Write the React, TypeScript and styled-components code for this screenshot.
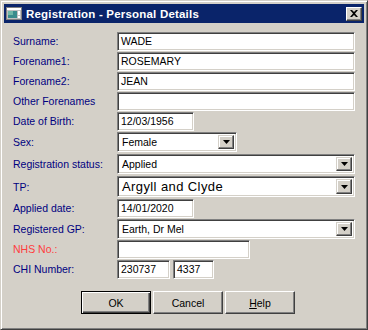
import React from 'react';
import styled, { createGlobalStyle, css } from 'styled-components';

const GlobalStyle = createGlobalStyle`
  html, body {
    margin: 0;
    padding: 0;
    background: #d4d0c8;
  }
  body {
    font-family: "Liberation Sans", Arial, sans-serif;
    font-size: 10.5px;
  }
`;

type RowDef = {
  label: string;
  h: number;
  red?: boolean;
  kind: 'text' | 'select' | 'chi';
  value?: string;
  w?: number;
  big?: boolean;
};

const rows: RowDef[] = [
  { label: 'Surname:', h: 20, kind: 'text', value: 'WADE' },
  { label: 'Forename1:', h: 20, kind: 'text', value: 'ROSEMARY' },
  { label: 'Forename2:', h: 20, kind: 'text', value: 'JEAN' },
  { label: 'Other Forenames', h: 20, kind: 'text', value: '' },
  { label: 'Date of Birth:', h: 20, kind: 'text', value: '12/03/1956', w: 77 },
  { label: 'Sex:', h: 22, kind: 'select', value: 'Female', w: 120 },
  { label: 'Registration status:', h: 22, kind: 'select', value: 'Applied' },
  { label: 'TP:', h: 23, kind: 'select', value: 'Argyll and Clyde', big: true },
  { label: 'Applied date:', h: 20, kind: 'text', value: '14/01/2020', w: 77 },
  { label: 'Registered GP:', h: 21, kind: 'select', value: 'Earth, Dr Mel' },
  { label: 'NHS No.:', h: 20, kind: 'text', value: '', w: 133, red: true },
  { label: 'CHI Number:', h: 20, kind: 'chi' },
];

const AppIcon = () => (
  <svg width="16" height="13" viewBox="0 0 16 13">
    <rect x="0.5" y="0.5" width="15" height="12" fill="#c0c0c0" stroke="#808080" />
    <rect x="1" y="1" width="14" height="2" fill="#ffffff" />
    <rect x="2" y="4" width="9" height="7" fill="#3a8c8c" />
    <rect x="2" y="4" width="5" height="4" fill="#70b8a8" />
    <rect x="12" y="4" width="2" height="4" fill="#ffffff" />
    <rect x="12" y="9" width="2" height="2" fill="#ffffff" />
  </svg>
);

const CloseGlyph = () => (
  <svg width="8" height="7" viewBox="0 0 8 7">
    <path d="M0 0h2l2 2 2-2h2L5 3.5 8 7H6L4 5 2 7H0l3-3.5z" fill="#000" />
  </svg>
);

const Arrow = () => (
  <svg width="7" height="4" viewBox="0 0 7 4">
    <path d="M0 0h7L3.5 4z" fill="#000" />
  </svg>
);

const App: React.FC = () => {
  return (
    <>
      <GlobalStyle />
      <Window>
        <TitleBar>
          <AppIcon />
          <Title>Registration - Personal Details</Title>
          <CloseButton>
            <CloseGlyph />
          </CloseButton>
        </TitleBar>
        <Form>
          {rows.map((r) => (
            <Row key={r.label} $h={r.h}>
              <Label $red={r.red}>{r.label}</Label>
              {r.kind === 'text' && <TextBox $w={r.w}>{r.value}</TextBox>}
              {r.kind === 'select' && (
                <Select $w={r.w} $big={r.big}>
                  <SelectValue $big={r.big}>{r.value}</SelectValue>
                  <DropButton>
                    <Arrow />
                  </DropButton>
                </Select>
              )}
              {r.kind === 'chi' && (
                <ChiGroup>
                  <TextBox $w={53}>230737</TextBox>
                  <TextBox $w={41}>4337</TextBox>
                </ChiGroup>
              )}
            </Row>
          ))}
        </Form>
        <Buttons>
          <Button $default>OK</Button>
          <Button>Cancel</Button>
          <Button>
            <u>H</u>elp
          </Button>
        </Buttons>
      </Window>
    </>
  );
};

export default App;

const raised = css`
  border: 1px solid;
  border-color: #ffffff #404040 #404040 #ffffff;
  box-shadow: inset -1px -1px #808080, inset 1px 1px #d4d0c8;
  background: #d4d0c8;
`;

const sunken = css`
  border: 1px solid;
  border-color: #808080 #ffffff #ffffff #808080;
  box-shadow: inset 1px 1px #404040, inset -1px -1px #d4d0c8;
  background: #ffffff;
`;

const Window = styled.div`
  box-sizing: border-box;
  width: 368px;
  height: 330px;
  padding: 3px;
  border: 1px solid;
  border-color: #d4d0c8 #404040 #404040 #d4d0c8;
  box-shadow: inset 1px 1px #ffffff, inset -1px -1px #808080;
  background: #d4d0c8;
  display: flex;
  flex-direction: column;
`;

const TitleBar = styled.div`
  height: 19px;
  background: #0a246a;
  display: flex;
  align-items: center;
  padding: 0 2px 0 2px;
  gap: 4px;
`;

const Title = styled.div`
  flex: 1;
  color: #ffffff;
  font-weight: bold;
  font-size: 11.5px;
  letter-spacing: 0.2px;
`;

const CloseButton = styled.div`
  box-sizing: border-box;
  width: 16px;
  height: 14px;
  ${raised};
  display: flex;
  align-items: center;
  justify-content: center;
`;

const Form = styled.div`
  padding: 8px 9px 0 9px;
  display: flex;
  flex-direction: column;
`;

const Row = styled.div<{ $h: number }>`
  height: ${({ $h }) => $h}px;
  display: grid;
  grid-template-columns: 104px 1fr;
  align-items: center;
`;

const Label = styled.div<{ $red?: boolean }>`
  color: ${({ $red }) => ($red ? '#ff3c3c' : '#000080')};
  white-space: nowrap;
`;

const TextBox = styled.div<{ $w?: number }>`
  box-sizing: border-box;
  height: 19px;
  width: ${({ $w }) => ($w ? `${$w}px` : '100%')};
  ${sunken};
  padding: 0 3px;
  display: flex;
  align-items: center;
  color: #000;
  white-space: nowrap;
`;

const ChiGroup = styled.div`
  display: flex;
  gap: 3px;
`;

const Select = styled.div<{ $w?: number; $big?: boolean }>`
  box-sizing: border-box;
  height: ${({ $big }) => ($big ? 21 : 20)}px;
  width: ${({ $w }) => ($w ? `${$w}px` : '100%')};
  ${sunken};
  padding: 2px;
  display: flex;
  align-items: stretch;
`;

const SelectValue = styled.div<{ $big?: boolean }>`
  flex: 1;
  display: flex;
  align-items: center;
  padding-left: 2px;
  color: #000;
  white-space: nowrap;
  ${({ $big }) =>
    $big &&
    css`
      font-size: 13px;
      letter-spacing: 0.4px;
    `}
`;

const DropButton = styled.div`
  box-sizing: border-box;
  width: 16px;
  ${raised};
  border-color: #d4d0c8 #404040 #404040 #d4d0c8;
  box-shadow: inset -1px -1px #808080, inset 1px 1px #ffffff;
  display: flex;
  align-items: center;
  justify-content: center;
`;

const Buttons = styled.div`
  display: flex;
  gap: 2px;
  padding: 12px 0 0 77px;
`;

const Button = styled.div<{ $default?: boolean }>`
  box-sizing: border-box;
  width: 70px;
  height: 23px;
  display: flex;
  align-items: center;
  justify-content: center;
  color: #000;
  ${raised};
  ${({ $default }) =>
    $default &&
    css`
      border: 1px solid #000;
      box-shadow: inset 1px 1px #ffffff, inset -1px -1px #404040,
        inset -2px -2px #808080;
    `}
`;
